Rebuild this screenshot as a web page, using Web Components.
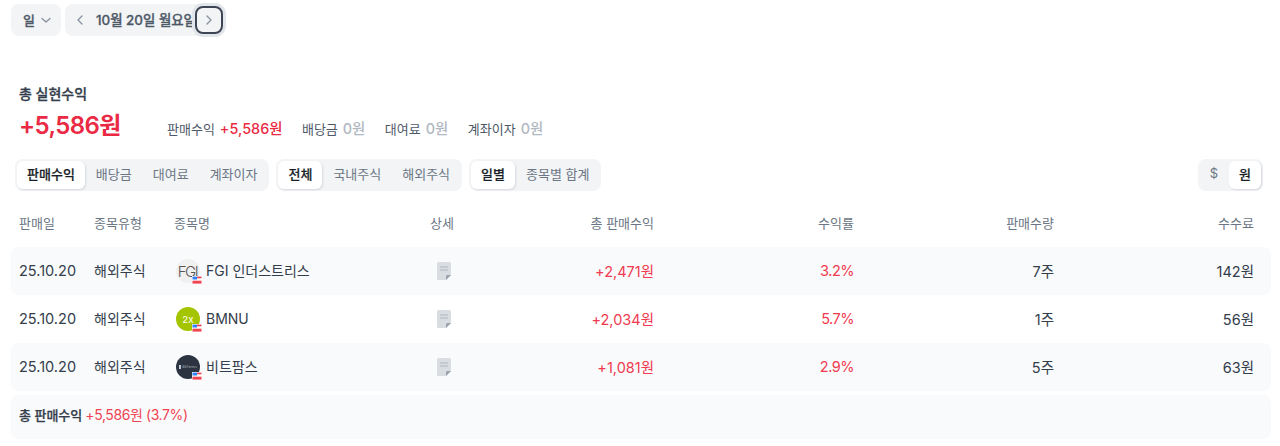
<!DOCTYPE html>
<html lang="ko">
<head>
<meta charset="utf-8">
<title>실현수익</title>
<style>
  html, body { margin: 0; background: #fff; }
  body {
    font-family: Inter, "Noto Sans CJK KR", sans-serif;
    color: #333d4b;
    width: 1280px;
    height: 446px;
    overflow: hidden;
  }
</style>
</head>
<body>
<profit-page>
  <date-bar slot="bar" unit="일" date="10월 20일 월요일"></date-bar>
  <profit-summary slot="summary" total="+5,586원">
    <summary-item label="판매수익" value="+5,586원" tone="up"></summary-item>
    <summary-item label="배당금" value="0원"></summary-item>
    <summary-item label="대여료" value="0원"></summary-item>
    <summary-item label="계좌이자" value="0원"></summary-item>
  </profit-summary>
  <filter-bar slot="filters">
    <seg-group items="판매수익,배당금,대여료,계좌이자" selected="0"></seg-group>
    <seg-group items="전체,국내주식,해외주식" selected="0"></seg-group>
    <seg-group items="일별,종목별 합계" selected="0"></seg-group>
    <seg-group slot="end" items="$,원" selected="1"></seg-group>
  </filter-bar>
  <sale-table slot="table">
    <sale-row date="25.10.20" kind="해외주식" name="FGI 인더스트리스" logo="fgi" total="+2,471원" rate="3.2%" qty="7주" fee="142원"></sale-row>
    <sale-row date="25.10.20" kind="해외주식" name="BMNU" logo="bmnu" total="+2,034원" rate="5.7%" qty="1주" fee="56원"></sale-row>
    <sale-row date="25.10.20" kind="해외주식" name="비트팜스" logo="bitf" total="+1,081원" rate="2.9%" qty="5주" fee="63원"></sale-row>
  </sale-table>
  <total-bar slot="total" label="총 판매수익" value="+5,586원 (3.7%)"></total-bar>
</profit-page>

<script>
class ProfitPage extends HTMLElement {
  constructor() {
    super();
    this.attachShadow( {mode: 'open'} ).innerHTML = `
      <style>
        :host { display: flex; flex-direction: column; padding: 4px 9px 0 11px; }
        .summary { padding: 48px 0 0 8px; }
        .filters { padding: 16px 8px 0 4px; }
        .table { padding-top: 10px; }
        .total { padding-top: 4px; }
      </style>
      <slot name="bar"></slot>
      <div class="summary"><slot name="summary"></slot></div>
      <div class="filters"><slot name="filters"></slot></div>
      <div class="table"><slot name="table"></slot></div>
      <div class="total"><slot name="total"></slot></div>
    `;
  }
}

class DateBar extends HTMLElement {
  connectedCallback() {
    const unit = this.getAttribute( 'unit' );
    const date = this.getAttribute( 'date' );
    this.attachShadow( {mode: 'open'} ).innerHTML = `
      <style>
        :host { display: flex; gap: 4px; align-items: center; height: 32px; }
        .pill {
          align-items: center;
          background: #f2f4f6;
          border-radius: 8px;
          color: #4e5968;
          display: flex;
          font-size: 13px;
          font-weight: 500;
          -webkit-text-stroke: 0.3px #4e5968;
          height: 32px;
        }
        .pill span { padding-bottom: 2px; }
        .unit { gap: 5px; padding: 0 9px 0 12px; width: 29px; box-sizing: content-box; }
        .date { padding-left: 10px; width: 148px; position: relative; box-sizing: content-box; }
        .date span { font-size: 13.4px; margin: 0 0 0 11px; white-space: nowrap; }
        svg { display: block; flex: none; fill: none; stroke: #8b95a1; stroke-width: 1.4; stroke-linecap: round; stroke-linejoin: round; }
        .next {
          align-items: center;
          background: #f2f4f6;
          border: 2px solid #3d4654;
          border-radius: 8px;
          box-shadow: 0 0 0 3px #e2e6ea;
          box-sizing: border-box;
          display: flex;
          height: 28px;
          justify-content: center;
          left: 130px;
          position: absolute;
          top: 2px;
          width: 28px;
        }
      </style>
      <div class="pill unit"><span>${unit}</span>
        <svg width="12" height="12" viewBox="0 0 12 12"><path d="M2 4.500l4 3.500 4-3.500"/></svg>
      </div>
      <div class="pill date">
        <svg width="10" height="12" viewBox="0 0 10 12"><path d="M7 2L3 6l4 4"/></svg>
        <span>${date}</span>
        <div class="next"><svg width="10" height="12" viewBox="0 0 10 12"><path d="M3 2l4 4-4 4"/></svg></div>
      </div>
    `;
  }
}

class ProfitSummary extends HTMLElement {
  connectedCallback() {
    this.attachShadow( {mode: 'open'} ).innerHTML = `
      <style>
        :host { display: block; }
        .title { color: #333d4b; font-size: 14px; font-weight: 500; -webkit-text-stroke: 0.3px #333d4b; line-height: 20px; }
        .line { align-items: baseline; display: flex; margin-top: 5px; height: 34px; }
        .big { color: #ea2a44; font-size: 24px; font-weight: 600; line-height: 34px; width: 148px; letter-spacing: -0.6px; }
        .items { display: flex; gap: 19.500px; }
      </style>
      <div class="title">총 실현수익</div>
      <div class="line">
        <div class="big">${this.getAttribute( 'total' )}</div>
        <div class="items"><slot></slot></div>
      </div>
    `;
  }
}

class SummaryItem extends HTMLElement {
  connectedCallback() {
    const up = this.getAttribute( 'tone' ) === 'up';
    this.attachShadow( {mode: 'open'} ).innerHTML = `
      <style>
        :host { display: flex; gap: 5px; align-items: baseline; font-size: 13px; color: #4e5968; }
        .value { font-size: 14.4px; font-weight: 500; color: ${up ? '#ea2a44' : '#b0b8c1'}; }
      </style>
      <span>${this.getAttribute( 'label' )}</span>
      <span class="value">${this.getAttribute( 'value' )}</span>
    `;
  }
}

class FilterBar extends HTMLElement {
  constructor() {
    super();
    this.attachShadow( {mode: 'open'} ).innerHTML = `
      <style>
        :host { display: flex; gap: 7px; justify-content: flex-start; }
        .end { margin-left: auto; }
      </style>
      <slot></slot>
      <div class="end"><slot name="end"></slot></div>
    `;
  }
}

class SegGroup extends HTMLElement {
  connectedCallback() {
    const selected = Number( this.getAttribute( 'selected' ) );
    const items = this.getAttribute( 'items' ).split( ',' ).map( ( item, index ) => {
      return `<div class="item${index === selected ? ' on' : ''}">${item}</div>`;
    } );
    this.attachShadow( {mode: 'open'} ).innerHTML = `
      <style>
        :host {
          background: #f2f4f6;
          border-radius: 8px;
          box-sizing: border-box;
          display: inline-flex;
          gap: 1px;
          height: 32px;
          padding: 2px;
        }
        .item {
          align-items: center;
          border-radius: 6px;
          color: #6b7684;
          display: flex;
          font-size: 13px;
          padding: 0 10px 4px;
          white-space: nowrap;
        }
        .on {
          background: #fff;
          box-shadow: 1px 1px 2px rgba(0, 27, 55, .12);
          color: #191f28;
          font-weight: 500;
          -webkit-text-stroke: 0.2px #191f28;
        }
      </style>
      ${items.join( '' )}
    `;
  }
}

class SaleTable extends HTMLElement {
  constructor() {
    super();
    this.attachShadow( {mode: 'open'} ).innerHTML = `
      <style>
        :host { display: block; }
        .head {
          align-items: center;
          box-sizing: border-box;
          color: #6b7684;
          display: grid;
          font-size: 13px;
          grid-template-columns: 75px 80px 230px 80px 170px 200px 200px 200px;
          height: 46px;
          padding: 0 17px 3px 8px;
        }
        .center { text-align: center; padding-right: 4px; }
        .right { text-align: right; }
        ::slotted( sale-row:nth-child( odd ) ) { background: #f9fafb; }
      </style>
      <div class="head">
        <div>판매일</div><div>종목유형</div><div>종목명</div>
        <div class="center">상세</div>
        <div class="right">총 판매수익</div><div class="right">수익률</div>
        <div class="right">판매수량</div><div class="right">수수료</div>
      </div>
      <slot></slot>
    `;
  }
}

class SaleRow extends HTMLElement {
  connectedCallback() {
    const attr = name => this.getAttribute( name );
    // latin-only names sit higher than the korean ones, so they need less lift
    const latin = /^[\x00-\x7f]+$/.test( attr( 'name' ) );
    this.attachShadow( {mode: 'open'} ).innerHTML = `
      <style>
        :host {
          align-items: center;
          border-radius: 8px;
          color: #333d4b;
          display: grid;
          font-size: 14.5px;
          grid-template-columns: 75px 80px 230px 80px 170px 200px 200px 200px;
          height: 48px;
          padding: 0 17px 0 8px;
        }
        .text { padding-bottom: 2px; }
        .kind { font-size: 14px; }
        .name { align-items: center; display: flex; font-size: 14px; gap: 6px; padding-left: 2px; }
        .name span { padding-bottom: ${latin ? 1 : 3}px; }
        .doc { display: flex; justify-content: center; }
        svg { display: block; }
        .right { text-align: right; }
        .up { color: #f03a50; }
        .rate { letter-spacing: -0.5px; }
      </style>
      <div class="text">${attr( 'date' )}</div>
      <div class="text kind">${attr( 'kind' )}</div>
      <div class="name"><stock-logo type="${attr( 'logo' )}"></stock-logo><span>${attr( 'name' )}</span></div>
      <div class="doc">
        <svg width="14" height="18" viewBox="0 0 14 18">
          <path d="M1.500 0h11a1.500 1.500 0 0 1 1.500 1.500v11.500l-5 5h-7.500a1.500 1.500 0 0 1-1.500-1.500v-15a1.500 1.500 0 0 1 1.500-1.500z" fill="#d9dde2"/>
          <path d="M14 13h-3.500a1.500 1.500 0 0 0-1.500 1.500v3.500z" fill="#98a1ab"/>
          <path d="M3 5h8M3 8h8" stroke="#aeb5bc" stroke-width="1"/>
        </svg>
      </div>
      <div class="text right up">${attr( 'total' )}</div>
      <div class="text right up rate">${attr( 'rate' )}</div>
      <div class="text right">${attr( 'qty' )}</div>
      <div class="text right">${attr( 'fee' )}</div>
    `;
  }
}

class StockLogo extends HTMLElement {
  connectedCallback() {
    const marks = {
      fgi: '<span class="fgi">FGI</span>',
      bmnu: '<span class="bmnu">2x</span>',
      bitf: '<i></i><span class="bitf">BitFarms</span>'
    };
    const type = this.getAttribute( 'type' );
    this.attachShadow( {mode: 'open'} ).innerHTML = `
      <style>
        :host { display: block; flex: none; height: 24px; position: relative; width: 24px; }
        .disc {
          align-items: center;
          border-radius: 50%;
          display: flex;
          height: 24px;
          justify-content: center;
          overflow: hidden;
          width: 24px;
        }
        .disc.fgi-bg { background: #f0f0f0; }
        .disc.bmnu-bg { background: #a4c400; }
        .disc.bitf-bg { background: #2b3440; gap: 1px; }
        .fgi { color: #555; font-size: 15px; font-weight: 300; letter-spacing: -1.500px; margin-right: 1px; }
        .bmnu { color: #eef5c8; font-size: 9.500px; font-weight: 600; }
        .bitf { color: #aeb4bb; font-size: 3.500px; }
        i { background: #c7ccd2; display: block; height: 4px; width: 2px; }
        svg { display: block; left: 15.500px; position: absolute; top: 17px; }
      </style>
      <div class="disc ${type}-bg">${marks[type]}</div>
      <svg width="10" height="8" viewBox="0 0 10 8">
        <rect width="10" height="8" fill="#fff"/>
        <rect x="0.500" y="4.700" width="9" height="2.900" fill="#f04452"/>
        <rect x="5" y="0.600" width="4.500" height="1.700" fill="#f04452"/>
        <rect x="0.500" y="0.600" width="4.500" height="2.900" fill="#3182f6"/>
      </svg>
    `;
  }
}

class TotalBar extends HTMLElement {
  connectedCallback() {
    this.attachShadow( {mode: 'open'} ).innerHTML = `
      <style>
        :host {
          align-items: center;
          background: #f9fafb;
          border-radius: 8px;
          box-sizing: border-box;
          display: flex;
          font-size: 13px;
          gap: 3px;
          height: 44px;
          padding: 0 0 6px 8px;
        }
        b { color: #333d4b; font-weight: 500; -webkit-text-stroke: 0.25px #333d4b; }
        span { color: #f04452; font-size: 14px; letter-spacing: -0.4px; }
      </style>
      <b>${this.getAttribute( 'label' )}</b>
      <span>${this.getAttribute( 'value' )}</span>
    `;
  }
}

customElements.define( 'profit-page', ProfitPage );
customElements.define( 'date-bar', DateBar );
customElements.define( 'profit-summary', ProfitSummary );
customElements.define( 'summary-item', SummaryItem );
customElements.define( 'filter-bar', FilterBar );
customElements.define( 'seg-group', SegGroup );
customElements.define( 'sale-table', SaleTable );
customElements.define( 'sale-row', SaleRow );
customElements.define( 'stock-logo', StockLogo );
customElements.define( 'total-bar', TotalBar );
</script>
</body>
</html>
